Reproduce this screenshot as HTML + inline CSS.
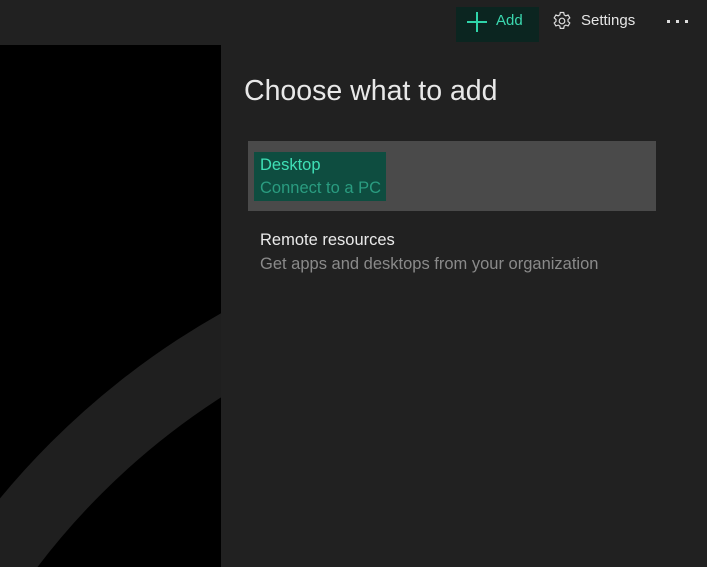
<!DOCTYPE html>
<html style="overflow:hidden"><head><meta charset="utf-8"><style>
*{margin:0;padding:0;box-sizing:border-box}
html,body{width:707px;height:567px;overflow:hidden}
body{background:#212121;position:relative;font-family:"Liberation Sans",sans-serif;}
.t{position:absolute;white-space:nowrap;line-height:1.15}
</style></head><body>
<div style="position:absolute;left:0;top:45px;width:221px;height:522px;background:#000;overflow:hidden">
<svg width="221" height="522" style="position:absolute;left:0;top:0">
<circle cx="610" cy="957" r="755" fill="none" stroke="#1f1f1f" stroke-width="72"/>
</svg>
</div>
<div style="position:absolute;left:456px;top:7px;width:83px;height:35px;background:#0b2520"></div>
<svg style="position:absolute;left:466px;top:11px" width="22" height="22"><path d="M11 1V21M1 11H21" stroke="#2fd4a9" stroke-width="2"/></svg>
<div class="t" style="left:496px;top:12px;font-size:15px;color:#3bd9b0">Add</div>
<svg style="position:absolute;left:552px;top:11px" width="20" height="20" viewBox="0 0 20 20"><path d="M8.3 1.5h3.4l.5 2.4 1.6.9 2.3-.8 1.7 2.9-1.8 1.6v1.9l1.8 1.6-1.7 2.9-2.3-.8-1.6.9-.5 2.4H8.3l-.5-2.4-1.6-.9-2.3.8-1.7-2.9 1.8-1.6V8.5L2.2 6.9l1.7-2.9 2.3.8 1.6-.9z" fill="none" stroke="#ddd" stroke-width="1.2"/><circle cx="10" cy="10" r="2.8" fill="none" stroke="#ddd" stroke-width="1.2"/></svg>
<div class="t" style="left:581px;top:12px;font-size:15px;color:#e6e6e6">Settings</div>
<div style="position:absolute;left:667px;top:20px;width:3px;height:3px;background:#ddd"></div>
<div style="position:absolute;left:676px;top:20px;width:3px;height:3px;background:#ddd"></div>
<div style="position:absolute;left:685px;top:20px;width:3px;height:3px;background:#ddd"></div>
<div class="t" style="left:244px;top:75px;font-size:28.5px;color:#e8e8e8">Choose what to add</div>
<div style="position:absolute;left:248px;top:141px;width:408px;height:70px;background:#4a4a4a"></div>
<div style="position:absolute;left:254px;top:152px;width:132px;height:49px;background:#0e4d40"></div>
<div class="t" style="left:260px;top:156px;font-size:16.5px;color:#3fe0b6">Desktop</div>
<div class="t" style="left:260px;top:179px;font-size:16.5px;color:#2a9c80">Connect to a PC</div>
<div class="t" style="left:260px;top:231px;font-size:16.5px;color:#eaeaea">Remote resources</div>
<div class="t" style="left:260px;top:255px;font-size:16.5px;color:#8a8a8a">Get apps and desktops from your organization</div>
</body></html>
